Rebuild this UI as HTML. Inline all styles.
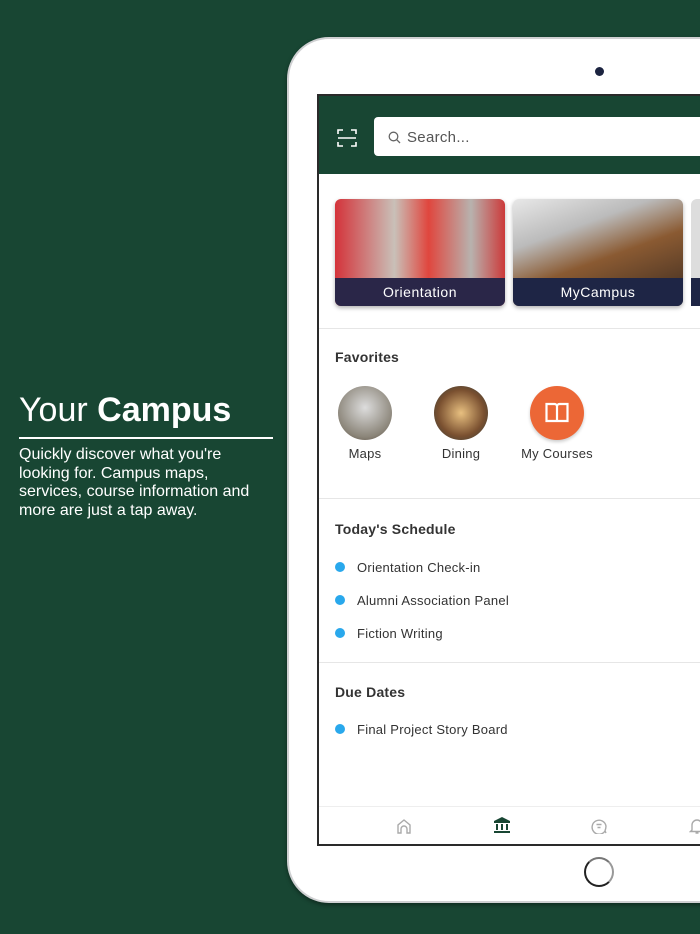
<!DOCTYPE html>
<html><head><meta charset="utf-8"><style>
*{margin:0;padding:0;box-sizing:border-box}
body{width:700px;height:934px;overflow:hidden;background:#184633;font-family:"Liberation Sans",sans-serif;position:relative}
.ab{position:absolute}
.t{color:#333;font-size:13px;letter-spacing:.25px;white-space:nowrap}
.h{color:#333;font-size:14px;font-weight:bold;letter-spacing:.2px}
</style></head><body>
<div class="ab" style="left:19px;top:391px;color:#fff;font-size:34px;">Your <b>Campus</b></div>
<div class="ab" style="left:19px;top:437px;width:254px;height:2px;background:#fff"></div>
<div class="ab" style="left:19px;top:446px;width:270px;color:#fff;font-size:16px;line-height:18.5px;white-space:nowrap">Quickly discover what you're<br>looking for. Campus maps,<br>services, course information and<br>more are just a tap away.</div>

<div class="ab" style="left:287px;top:37px;width:460px;height:866px;background:#fff;border-radius:42px;border:2px solid #cfd0d2;box-shadow:0 2px 4px rgba(0,0,0,.4)"></div>
<div class="ab" style="left:595px;top:67px;width:9px;height:9px;border-radius:50%;background:#1c2440"></div>
<div class="ab" style="left:584px;top:857px;width:30px;height:30px;border-radius:50%;border:2px solid #222;border-right-color:#999;border-top-color:#777"></div>

<div class="ab" style="left:317px;top:94px;width:400px;height:752px;border:2px solid #2a2a2a;background:#fff;overflow:hidden">
 <div class="ab" style="left:0;top:0;width:400px;height:78px;background:#184633"></div>
 <svg class="ab" style="left:18px;top:32px" width="20" height="20" viewBox="0 0 20 20" fill="none" stroke="#fff" stroke-width="1.6"><path d="M1 6V2h5M14 2h5v4M19 14v4h-5M6 18H1v-4M1 10h18"/></svg>
 <div class="ab" style="left:55px;top:21px;width:360px;height:39px;background:#fff;border-radius:4px"></div>
 <svg class="ab" style="left:69px;top:35px" width="13" height="13" viewBox="0 0 13 13" fill="none" stroke="#666" stroke-width="1.3"><circle cx="5.5" cy="5.5" r="4.3"/><path d="M8.6 8.6L12 12"/></svg>
 <div class="ab" style="left:88px;top:33px;font-size:15px;color:#555;letter-spacing:.3px">Search...</div>

 <div class="ab" style="left:16px;top:103px;width:170px;height:107px;border-radius:6px;overflow:hidden;background:linear-gradient(90deg,#d4333a 0%,#c9c0b8 35%,#e0463e 55%,#b8b2ae 80%,#cc3a3a 100%);box-shadow:0 2px 4px rgba(0,0,0,.3)">
  <div class="ab" style="left:0;top:79px;width:170px;height:28px;background:#2a2648;color:#fff;font-size:14px;text-align:center;line-height:28px;letter-spacing:.5px">Orientation</div></div>
 <div class="ab" style="left:194px;top:103px;width:170px;height:107px;border-radius:6px;overflow:hidden;background:linear-gradient(160deg,#e8e8e8 0%,#bbb 30%,#8a5a32 55%,#3a2a20 100%);box-shadow:0 2px 4px rgba(0,0,0,.3)">
  <div class="ab" style="left:0;top:79px;width:170px;height:28px;background:#1e2545;color:#fff;font-size:14px;text-align:center;line-height:28px;letter-spacing:.5px">MyCampus</div></div>
 <div class="ab" style="left:372px;top:103px;width:40px;height:107px;border-radius:6px;background:#ddd"><div class="ab" style="left:0;top:79px;width:40px;height:28px;background:#1e2545"></div></div>

 <div class="ab" style="left:0;top:232px;width:400px;height:1px;background:#e6e6e6"></div>
 <div class="ab h" style="left:16px;top:253px">Favorites</div>
 <div class="ab" style="left:19px;top:290px;width:54px;height:54px;border-radius:50%;background:radial-gradient(circle at 50% 40%,#ddd,#8a8478 70%,#4a3c30)"></div>
 <div class="ab" style="left:115px;top:290px;width:54px;height:54px;border-radius:50%;background:radial-gradient(circle at 50% 50%,#e8c080,#7a5030 60%,#2a3a38)"></div>
 <div class="ab" style="left:211px;top:290px;width:54px;height:54px;border-radius:50%;background:#ec6736;box-shadow:0 2px 3px rgba(0,0,0,.2)"></div>
 <svg class="ab" style="left:226px;top:306px" width="24" height="22" viewBox="0 0 24 22" fill="none" stroke="#fff" stroke-width="2.2"><path d="M1.5 2h8a2.5 2.5 0 0 1 2.5 2.5V19H1.5zM22.5 2h-8A2.5 2.5 0 0 0 12 4.5V19h10.5z"/></svg>
 <div class="ab t" style="left:46px;top:350px;transform:translateX(-50%)">Maps</div>
 <div class="ab t" style="left:142px;top:350px;transform:translateX(-50%)">Dining</div>
 <div class="ab t" style="left:238px;top:350px;transform:translateX(-50%)">My Courses</div>

 <div class="ab" style="left:0;top:402px;width:400px;height:1px;background:#e6e6e6"></div>
 <div class="ab h" style="left:16px;top:425px">Today's Schedule</div>
 <div class="ab" style="left:16px;top:466px;width:10px;height:10px;border-radius:50%;background:#29a8ec"></div>
 <div class="ab t" style="left:38px;top:464px">Orientation Check-in</div>
 <div class="ab" style="left:16px;top:499px;width:10px;height:10px;border-radius:50%;background:#29a8ec"></div>
 <div class="ab t" style="left:38px;top:497px">Alumni Association Panel</div>
 <div class="ab" style="left:16px;top:532px;width:10px;height:10px;border-radius:50%;background:#29a8ec"></div>
 <div class="ab t" style="left:38px;top:530px">Fiction Writing</div>

 <div class="ab" style="left:0;top:566px;width:400px;height:1px;background:#e6e6e6"></div>
 <div class="ab h" style="left:16px;top:588px">Due Dates</div>
 <div class="ab" style="left:16px;top:628px;width:10px;height:10px;border-radius:50%;background:#29a8ec"></div>
 <div class="ab t" style="left:38px;top:626px">Final Project Story Board</div>

 <div class="ab" style="left:0;top:710px;width:400px;height:1px;background:#eee"></div>
 <svg class="ab" style="left:77px;top:722px" width="16" height="16" viewBox="0 0 16 16" fill="none" stroke="#aaa" stroke-width="1.4"><path d="M2 15V7l6-5 6 5v8h-3v-4a3 3 0 0 0-6 0v4z"/></svg>
 <svg class="ab" style="left:174px;top:720px" width="18" height="18" viewBox="0 0 18 18" fill="#184633"><path d="M1 5L9 1l8 4v2H1zM3 8h2v6H3zM8 8h2v6H8zM13 8h2v6h-2zM1 15h16v2H1z"/></svg>
 <svg class="ab" style="left:272px;top:722px" width="16" height="16" viewBox="0 0 16 16" fill="none" stroke="#aaa" stroke-width="1.4"><path d="M14 13A7 7 0 1 1 15 8c0 2-.5 3.5-1 5l1 2zM5.5 6.5h5M6.5 9.5h3"/></svg>
 <svg class="ab" style="left:370px;top:722px" width="16" height="16" viewBox="0 0 16 16" fill="none" stroke="#aaa" stroke-width="1.4"><path d="M3 12V7a5 5 0 0 1 10 0v5l1.5 1.5h-13zM6.5 15h3"/></svg>
</div>
</body></html>
